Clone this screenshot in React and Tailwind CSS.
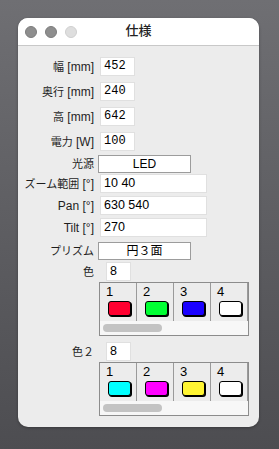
import React from "react"

const font = { fontFamily: '"Liberation Sans", "Noto Sans CJK JP", sans-serif' }

function Row({ jp, en, children, className = "" }) {
    return (
        <div className={"flex items-center " + className}>
            <div className="w-[76px] shrink-0 text-right text-[12px] text-[#1e1e1e] whitespace-nowrap">
                {jp && <span className="text-[11px]">{jp}</span>}
                {jp && en ? " " : ""}
                {en}
            </div>
            {children}
        </div>
    )
}

function MonoInput({ value }) {
    return (
        <div className="ml-[6px] w-[35px] h-[19px] bg-white border border-[#e0e0e0] pl-[3px] text-[12px] leading-[17px] text-black" style={{ fontFamily: '"Liberation Mono", monospace' }}>
            {value}
        </div>
    )
}

function TextInput({ value }) {
    return (
        <div className="ml-[6px] w-[107px] h-[19px] bg-white border border-[#e0e0e0] pl-[3px] text-[12.5px] leading-[17px] text-black">
            {value}
        </div>
    )
}

function Combo({ value }) {
    return (
        <div className="ml-[4px] w-[93px] h-[18px] bg-white border border-[#9c9c9c] text-center text-[12px] leading-[16px] text-black">
            {value}
        </div>
    )
}

function Palette({ colors }) {
    return (
        <div className="ml-[81px] w-[150px] border border-[#8c8c8c] bg-[#ececec]">
            <div className="flex h-[38px]">
                {colors.map((c, i) => (
                    <div key={i} className="w-[37px] h-full border-r border-[#9a9a9a] pl-[6px] pt-[1px] flex flex-col">
                        <div className="text-[13px] leading-[16px] text-black">{i + 1}</div>
                        <div className="mt-[1px] ml-[2px] w-[23px] h-[15px] rounded-[3px] border border-black shadow-[1px_1px_0_#000]" style={{ backgroundColor: c }} />
                    </div>
                ))}
            </div>
            <div className="h-[14px] bg-[#f7f7f7] flex items-center pl-[3px]">
                <div className="w-[59px] h-[8px] rounded-full bg-[#c3c3c3]" />
            </div>
        </div>
    )
}

export default function App() {
    return (
        <div className="w-[279px] h-[449px] bg-gradient-to-b from-[#6f6f73] to-[#4d4d51] pt-[18px] pl-[18px]" style={font}>
            <div className="w-[241px] h-[409px] rounded-[10px] overflow-hidden bg-[#ececec] shadow-[0_1px_3px_rgba(0,0,0,0.3)]">
                <div className="relative h-[28px] bg-white border-b border-[#c8c8c8] flex items-center justify-center">
                    <div className="absolute left-[7px] top-[8px] flex gap-[8px]">
                        <div className="w-[12px] h-[12px] rounded-full bg-[#8e8e8e] border border-[#7c7c7c]" />
                        <div className="w-[12px] h-[12px] rounded-full bg-[#8e8e8e] border border-[#7c7c7c]" />
                        <div className="w-[12px] h-[12px] rounded-full bg-[#dedede] border border-[#cfcfcf]" />
                    </div>
                    <div className="text-[13px] font-medium text-[#222] mt-[-1px]">仕様</div>
                </div>

                <div className="pt-[11px]">
                    <Row jp="幅" en="[mm]"><MonoInput value="452" /></Row>
                    <Row jp="奥行" en="[mm]" className="mt-[6px]"><MonoInput value="240" /></Row>
                    <Row jp="高" en="[mm]" className="mt-[6px]"><MonoInput value="642" /></Row>
                    <Row jp="電力" en="[W]" className="mt-[6px]"><MonoInput value="100" /></Row>
                    <Row jp="光源" className="mt-[4px]"><Combo value="LED" /></Row>
                    <Row jp="ズーム範囲" en="[°]" className="mt-[1px]"><TextInput value="10 40" /></Row>
                    <Row en="Pan [°]" className="mt-[3px]"><TextInput value="630 540" /></Row>
                    <Row en="Tilt [°]" className="mt-[3px]"><TextInput value="270" /></Row>
                    <Row jp="プリズム" className="mt-[5px]"><Combo value="円３面" /></Row>

                    <Row jp="色" className="mt-[2px]">
                        <div className="ml-[12px] w-[25px] h-[19px] bg-white border border-[#e0e0e0] pl-[3px] text-[12.5px] leading-[17px] text-black">8</div>
                    </Row>
                    <div className="mt-[1px]">
                        <Palette colors={["#ff0030", "#00ff33", "#1a00ff", "#ffffff"]} />
                    </div>

                    <Row jp="色２" className="mt-[6px]">
                        <div className="ml-[12px] w-[25px] h-[19px] bg-white border border-[#e0e0e0] pl-[3px] text-[12.5px] leading-[17px] text-black">8</div>
                    </Row>
                    <div className="mt-[1px]">
                        <Palette colors={["#00ffff", "#ff00ff", "#fff533", "#ffffff"]} />
                    </div>
                </div>
            </div>
        </div>
    )
}
